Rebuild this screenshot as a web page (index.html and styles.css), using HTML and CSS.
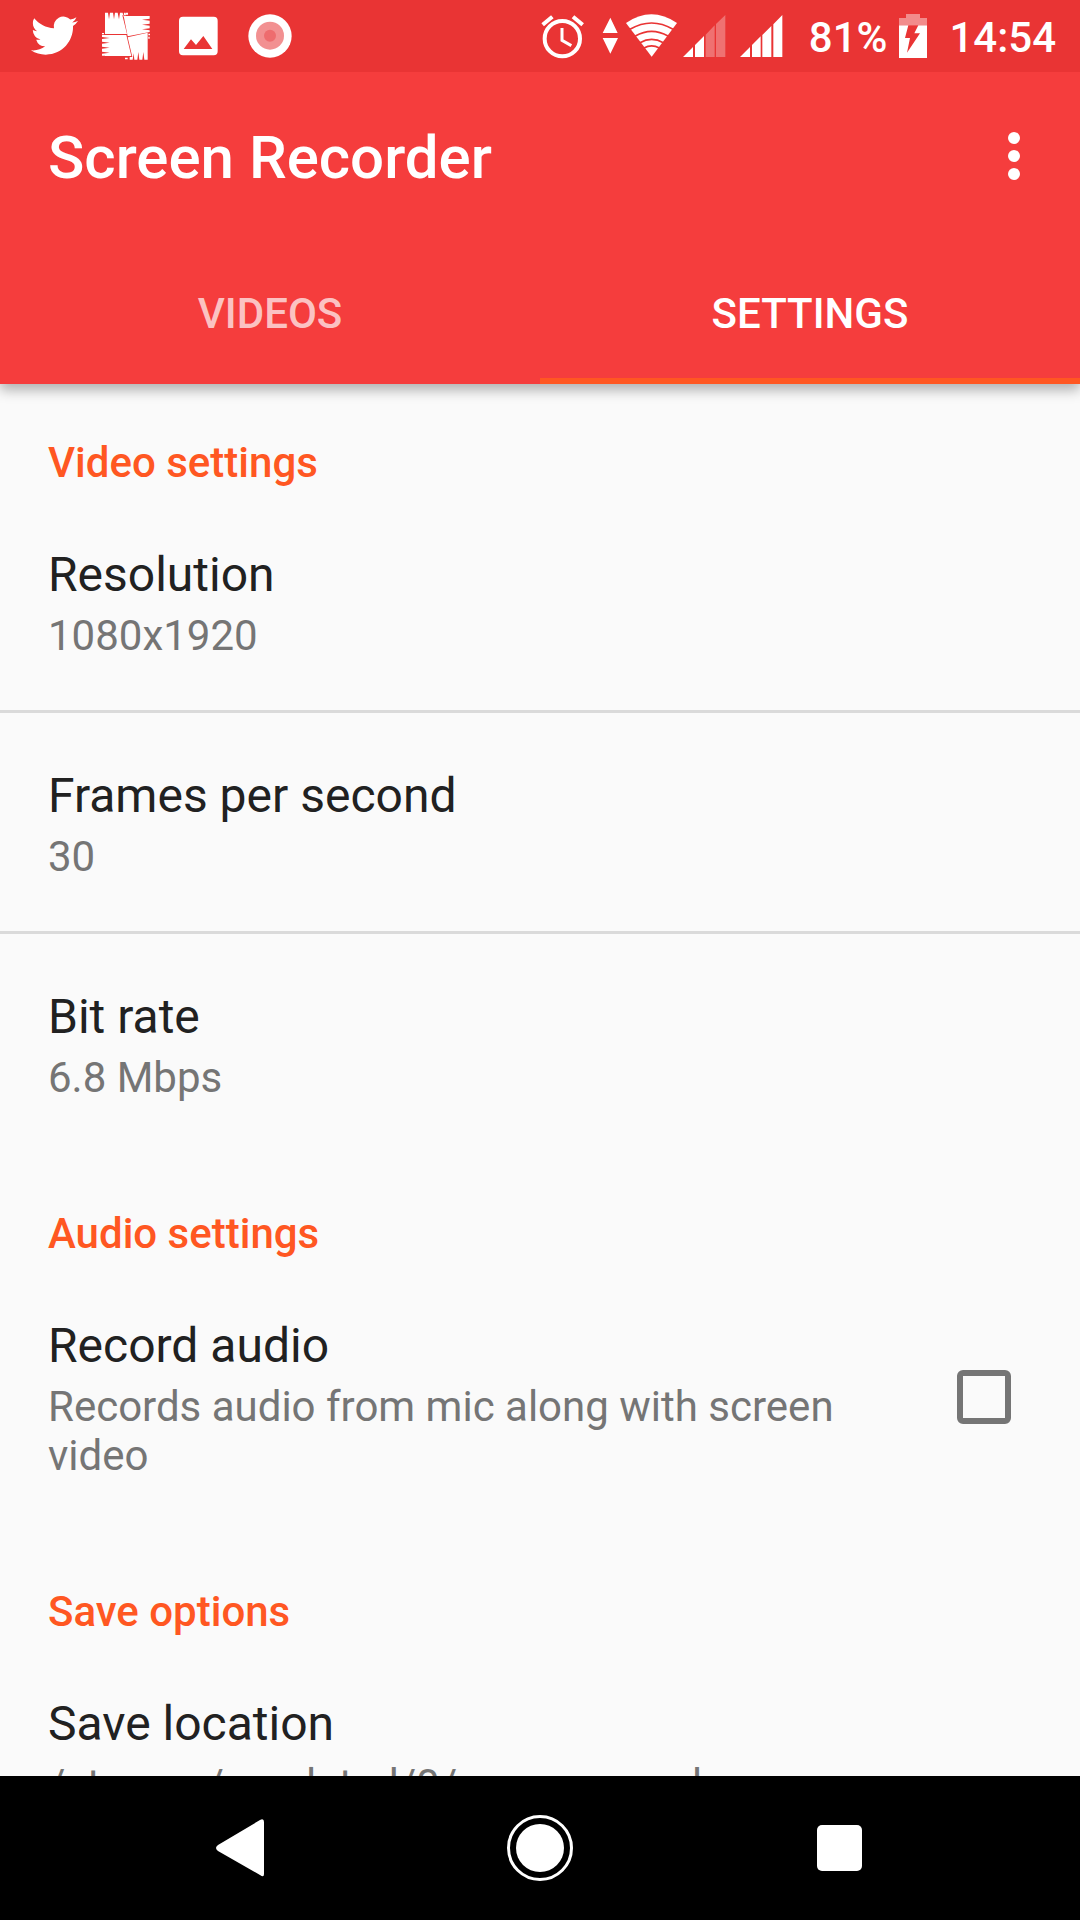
FILE: index.html
```html
<!DOCTYPE html>
<html lang="en">
<head>
  <meta charset="UTF-8" />
  <meta name="viewport" content="width=device-width, initial-scale=1" />
  <title>Screen Recorder</title>
  <link rel="stylesheet" href="styles.css">
</head>
<body>
  <!-- System status bar -->
  <div class="status-bar">
    <div class="notifications">
      <svg class="icon" viewBox="-0.5 -0.1 24.6 24.6" aria-hidden="true">
        <path d="M23.953 4.57a10 10 0 01-2.825.775 4.958 4.958 0 002.163-2.723c-.951.555-2.005.959-3.127 1.184a4.92 4.92 0 00-8.384 4.482C7.69 8.095 4.067 6.13 1.64 3.162a4.822 4.822 0 00-.666 2.475c0 1.71.87 3.213 2.188 4.096a4.904 4.904 0 01-2.228-.616v.06a4.923 4.923 0 003.946 4.827 4.996 4.996 0 01-2.212.085 4.936 4.936 0 004.604 3.417 9.867 9.867 0 01-6.102 2.105c-.39 0-.779-.023-1.17-.067a13.995 13.995 0 007.557 2.209c9.053 0 13.998-7.496 13.998-13.985 0-.21 0-.42-.015-.63A9.935 9.935 0 0024 4.59z"/>
      </svg>
      <svg class="icon" viewBox="306 36 144 144" aria-hidden="true">
        <path d="M315 38h9l3 20 3-20h9l3 20 3-20h8l4 20 3-20h8l3 14 1-14h5l1 8h-11l14 56h-66z"/>
        <path d="M371 48h78v8l-23 3 23 3v9l-23 3 23 3v8l-23 3 23 3v5l-66 13z"/>
        <path d="M306 105h73l15 63h-79v-1h-9v-6l23-3-23-3v-9l23-3-23-3v-9l23-3-23-3v-8l23-3-23-3z"/>
        <path d="M383 112l60-14v81h-10l-3-23-3 23h-9l-3-23-3 23h-9l-2-19-3 19h-9v-8h8z"/>
        <path d="M375 173h8v5h-8zM445 101h5v5h-5zM445 110h4v6h-4zM306 99h6v4h-6zM378 38h6v6h-6z"/>
      </svg>
      <svg class="icon" viewBox="522 36 144 144" aria-hidden="true">
        <path fill-rule="evenodd" d="M549 50h92q12 0 12 12v92q0 12-12 12h-92q-12 0-12-12V62q0-12 12-12zm2 97h86l-27-39-22 27-15-17z"/>
      </svg>
      <svg class="icon" viewBox="738 36 144 144" aria-hidden="true">
        <circle cx="810" cy="108" r="65"/>
        <circle class="ring" cx="810" cy="107" r="42"/>
        <circle class="ring-core" cx="810" cy="107" r="18"/>
      </svg>
    </div>
    <div class="system">
      <svg class="icon" viewBox="57 36 144 144" aria-label="Alarm">
        <circle class="line" cx="127" cy="116" r="53"/>
        <path class="line thin" d="M126 84v37l28 16"/>
        <path class="line" d="M68 74l29-24M159 50l29 24"/>
      </svg>
      <svg class="icon network" viewBox="237 36 594 144" aria-label="Network">
        <path d="M271 53l22 46h-45zM248 114h46l-23 47z"/>
        <!-- Wi-Fi fan cut by arcs -->
        <path d="M318 69q76-52 153 0l-76 101z"/>
        <path class="cut" d="M330 88q65-38 129 0M346 108q49-28 98 0M360 128q35-20 70 0M372 144q23-13 46 0"/>
        <path d="M489 171l30-30v30zM525 135l27-27v63h-27z"/>
        <path class="faint" d="M557 104l27-28v95h-27zM588 72l28-27v126h-28z"/>
        <path d="M660 171l30-30v30zM696 135l26-26v62h-26zM727 105l27-27v93h-27zM760 73l27-28v126h-27z"/>
      </svg>
      <span class="status-text">81%</span>
      <svg class="icon battery" viewBox="327 36 114 144" aria-label="Charging">
        <path class="battery-top" d="M348 42h42v12h21v22h-84V54h21z"/>
        <path d="M327 76h84v98h-84z"/>
        <path class="bolt" d="M355 76l-10 38h15l-9 44 39-58h-17l12-24z"/>
      </svg>
      <time class="status-text">14:54</time>
    </div>
  </div>

  <header class="app-bar">
    <div class="toolbar">
      <h1>Screen Recorder</h1>
      <button class="menu" type="button" aria-label="More options">
        <svg viewBox="0 0 48 48" aria-hidden="true">
          <circle cx="24" cy="6" r="6"/>
          <circle cx="24" cy="24" r="6"/>
          <circle cx="24" cy="42" r="6"/>
        </svg>
      </button>
    </div>
    <nav class="tabs">
      <a class="tab" href="#videos">VIDEOS</a>
      <a class="tab active" href="#settings">SETTINGS</a>
    </nav>
  </header>

  <main class="settings" id="settings">
    <section>
      <h2>Video settings</h2>
      <div class="item">
        <div class="name">Resolution</div>
        <div class="value">1080x1920</div>
      </div>
      <div class="item">
        <div class="name">Frames per second</div>
        <div class="value">30</div>
      </div>
      <div class="item">
        <div class="name">Bit rate</div>
        <div class="value">6.8 Mbps</div>
      </div>
    </section>
    <section>
      <h2>Audio settings</h2>
      <div class="item with-check">
        <label for="recordAudio">
          <span class="name">Record audio</span>
          <span class="value">Records audio from mic along with screen video</span>
        </label>
        <input type="checkbox" id="recordAudio" />
      </div>
    </section>
    <section>
      <h2>Save options</h2>
      <div class="item">
        <div class="name">Save location</div>
        <div class="value">/storage/emulated/0/screenrecorder</div>
      </div>
    </section>
  </main>

  <!-- System navigation -->
  <div class="nav-bar">
    <button type="button" aria-label="Back">
      <svg viewBox="0 0 72 72" aria-hidden="true"><path d="M56 8Q60 6 60 10V62Q60 66 56 63L14 39Q10 36 14 33z"/></svg>
    </button>
    <button type="button" aria-label="Home">
      <svg viewBox="0 0 72 72" aria-hidden="true"><circle class="outline" cx="36" cy="36" r="31.5"/><circle cx="36" cy="36" r="24"/></svg>
    </button>
    <button type="button" aria-label="Recent apps">
      <svg viewBox="0 0 72 72" aria-hidden="true"><rect x="13" y="13" width="45" height="46" rx="5"/></svg>
    </button>
  </div>
</body>
</html>
```

FILE: styles.css
```css
* {
  box-sizing: border-box;
}

body {
  margin: 0;
  height: 100vh;
  display: flex;
  flex-direction: column;
  overflow: hidden;
  font-family: Roboto, sans-serif;
  background: #fafafa;
  color: #212121;
}

svg {
  display: block;
  fill: #fff;
}

button {
  display: flex;
  align-items: center;
  justify-content: center;
  padding: 0;
  border: none;
  background: none;
  cursor: pointer;
}

/* status bar */
.status-bar {
  display: flex;
  justify-content: space-between;
  flex-shrink: 0;
  height: 72px;
  padding: 0 24px 0 30px;
  background: #e93434;
  color: #fff;
  font-size: 42px;
  font-weight: 500;
}

.notifications,
.system {
  display: flex;
  align-items: center;
  gap: 24px;
}

.system {
  gap: 12px;
}

.status-text {
  padding-top: 2px;
}

.icon {
  width: 48px;
  height: 48px;
}

.network {
  width: 198px;
}

.battery {
  width: 38px;
}

.ring {
  fill: #f29091;
}

.ring-core {
  fill: #ee6c6e;
}

.line {
  fill: none;
  stroke: #fff;
  stroke-width: 12;
}

.thin {
  stroke-width: 9;
}

.cut {
  fill: none;
  stroke: #e93434;
  stroke-width: 5;
}

.faint {
  opacity: 0.3;
}

.battery-top {
  fill: #f28b8b;
}

.bolt {
  fill: #e93434;
}

/* app bar */
.app-bar {
  position: relative;
  flex-shrink: 0;
  background: #f53d3d;
  color: #fff;
  box-shadow: 0 6px 12px rgba(0, 0, 0, 0.3);
  clip-path: inset(0 0 -24px 0);
}

.toolbar {
  display: flex;
  align-items: center;
  justify-content: space-between;
  height: 168px;
  padding: 0 30px 0 48px;
}

h1 {
  margin: 0;
  padding-top: 2px;
  font-size: 60px;
  font-weight: 500;
}

.menu {
  width: 72px;
  height: 120px;
}

.menu svg {
  width: 48px;
  height: 48px;
}

.tabs {
  display: flex;
  height: 144px;
}

.tab {
  flex: 1;
  display: flex;
  align-items: center;
  justify-content: center;
  padding-top: 8px;
  border-bottom: 6px solid transparent;
  color: rgba(255, 255, 255, 0.7);
  font-size: 42px;
  font-weight: 500;
  text-decoration: none;
}

.tab.active {
  color: #fff;
  border-bottom-color: #ff5722;
}

/* settings list */
.settings {
  flex: 1;
  min-height: 0;
  overflow: hidden;
}

section + section {
  margin-top: 3px;
}

h2 {
  margin: 0;
  padding: 54px 48px 4px;
  font-size: 42px;
  line-height: 50px;
  font-weight: 500;
  color: #ff5722;
}

.item {
  padding: 51px 48px 50px;
}

.item + .item {
  border-top: 3px solid #dadada;
}

.name,
.value {
  display: block;
}

.name {
  margin-bottom: 4px;
  font-size: 48px;
  line-height: 64px;
}

.value {
  font-size: 42px;
  line-height: 49px;
  color: #757575;
}

.with-check {
  display: flex;
  align-items: center;
  justify-content: space-between;
  gap: 60px;
  padding-right: 69px;
}

input[type="checkbox"] {
  appearance: none;
  flex-shrink: 0;
  width: 54px;
  height: 54px;
  margin: 0;
  border: 6px solid #757575;
  border-radius: 6px;
}

input[type="checkbox"]:checked {
  background: #ff5722;
  border-color: #ff5722;
}

/* navigation bar */
.nav-bar {
  display: flex;
  flex-shrink: 0;
  height: 144px;
  padding: 0 90px;
  background: #000;
}

.nav-bar button {
  flex: 1;
}

.nav-bar svg {
  width: 72px;
  height: 72px;
}

.outline {
  fill: none;
  stroke: #fff;
  stroke-width: 3;
}
```
